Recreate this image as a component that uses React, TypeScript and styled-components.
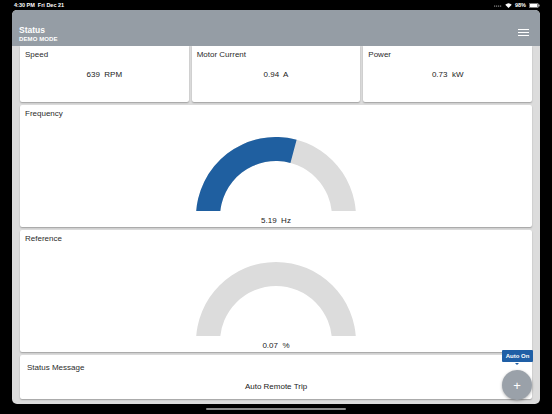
import React from 'react';
import styled, { createGlobalStyle } from 'styled-components';

const Global = createGlobalStyle`
  html, body {
    margin: 0;
    padding: 0;
    background: #000;
  }
  body {
    font-family: "Liberation Sans", Arial, sans-serif;
  }
`;

const Screen = styled.div`
  width: 552px;
  height: 414px;
  background: #000;
  display: flex;
  flex-direction: column;
  overflow: hidden;
  position: relative;
`;

const StatusBar = styled.div`
  height: 10px;
  display: flex;
  align-items: center;
  justify-content: space-between;
  padding: 0 12px 0 14px;
  color: #fff;
  font-size: 5.5px;
  font-weight: 600;
`;

const StatusRight = styled.div`
  display: flex;
  align-items: center;
  gap: 3px;
`;

const Window = styled.div`
  margin: 0 12px;
  height: 394px;
  background: #dcdcdc;
  border-radius: 5px;
  overflow: hidden;
  display: flex;
  flex-direction: column;
`;

const Header = styled.div`
  height: 36px;
  flex-shrink: 0;
  background: #959da5;
  display: flex;
  align-items: flex-end;
  justify-content: space-between;
  padding: 0 11px 3px 7px;
  box-sizing: border-box;
  color: #fff;
`;

const HeaderText = styled.div`
  display: flex;
  flex-direction: column;
`;

const HeaderTitle = styled.div`
  font-size: 8.5px;
  font-weight: 700;
  line-height: 10px;
`;

const HeaderSub = styled.div`
  font-size: 6px;
  font-weight: 700;
  line-height: 8px;
  letter-spacing: 0.1px;
`;

const Burger = styled.div`
  width: 11px;
  display: flex;
  flex-direction: column;
  gap: 1.7px;
  margin-bottom: 7px;
  & span {
    display: block;
    height: 1.3px;
    background: #fff;
  }
`;

const Content = styled.div`
  flex: 1;
  display: flex;
  flex-direction: column;
  gap: 3px;
  padding: 0 8px;
  overflow: hidden;
`;

const TopRow = styled.div`
  display: grid;
  grid-template-columns: repeat(3, 1fr);
  gap: 3px;
  height: 56px;
  flex-shrink: 0;
`;

const Card = styled.div<{ $h: number; $topFlat?: boolean }>`
  background: #fff;
  height: ${p => p.$h}px;
  flex-shrink: 0;
  border-radius: ${p => (p.$topFlat ? '0 0 2px 2px' : '2px')};
  box-shadow: 0 1px 1.5px rgba(0, 0, 0, 0.28);
  display: flex;
  flex-direction: column;
  align-items: center;
  box-sizing: border-box;
  position: relative;
`;

const Title = styled.div<{ $big?: boolean; $top: number }>`
  align-self: stretch;
  padding: ${p => p.$top}px 0 0 ${p => (p.$big ? 7 : 5)}px;
  font-size: 8px;
  line-height: 10px;
  color: #2b2b2b;
`;

const Value = styled.div<{ $mt: number }>`
  margin-top: ${p => p.$mt}px;
  font-size: 8px;
  line-height: 10px;
  color: #222;
  white-space: pre;
`;

const GaugeSvg = styled.svg`
  margin-top: 18px;
  display: block;
`;

const Tip = styled.div`
  position: absolute;
  left: 502px;
  top: 350px;
  width: 31px;
  height: 12px;
  background: #1f5fa6;
  color: #fff;
  font-size: 6px;
  font-weight: 700;
  display: flex;
  align-items: center;
  justify-content: center;
  border-radius: 1px;
  &::after {
    content: '';
    position: absolute;
    left: 13px;
    bottom: -2.5px;
    border-left: 2.5px solid transparent;
    border-right: 2.5px solid transparent;
    border-top: 2.5px solid #1f5fa6;
  }
`;

const Fab = styled.div`
  position: absolute;
  left: 502px;
  top: 370px;
  width: 30px;
  height: 30px;
  border-radius: 50%;
  background: #9aa1a9;
  box-shadow: 0 1px 3px rgba(0, 0, 0, 0.3);
  color: #fff;
  font-size: 13px;
  display: flex;
  align-items: center;
  justify-content: center;
`;

const HomeArea = styled.div`
  flex: 1;
  display: flex;
  align-items: center;
  justify-content: center;
`;

const HomeBar = styled.div`
  width: 140px;
  height: 2.5px;
  border-radius: 2px;
  background: #8c8c8c;
`;

const A = (r: number, a: number) => {
  const rad = (a * Math.PI) / 180;
  return [80 + r * Math.cos(rad), 80 - r * Math.sin(rad)].map(n => n.toFixed(2)).join(' ');
};

function Gauge({ frac }: { frac: number }) {
  const end = 180 - 180 * frac;
  const full = 'M0 80 A80 80 0 0 1 160 80 L136 80 A56 56 0 0 0 24 80 Z';
  const blue = `M0 80 A80 80 0 0 1 ${A(80, end)} L${A(56, end)} A56 56 0 0 0 24 80 Z`;
  return (
    <GaugeSvg width="160" height="74" viewBox="0 0 160 74">
      <path d={full} fill="#dcdcdc" />
      {frac > 0 && <path d={blue} fill="#1f5fa0" />}
    </GaugeSvg>
  );
}

const tops = [
  { t: 'Speed', v: '639  RPM' },
  { t: 'Motor Current', v: '0.94  A' },
  { t: 'Power', v: '0.73  kW' },
];

export default function App() {
  return (
    <Screen>
      <Global />
      <StatusBar>
        <span>4:30 PM&nbsp;&nbsp;Fri Dec 21</span>
        <StatusRight>
          <svg width="8" height="3" viewBox="0 0 8 3">
            {[0, 2, 4, 6].map(x => (
              <rect key={x} x={x} y="1.5" width="1.2" height="1.2" fill="#888" />
            ))}
          </svg>
          <svg width="7" height="5" viewBox="0 0 14 10">
            <path d="M7 10 L0.5 3.5 A9.5 9.5 0 0 1 13.5 3.5 Z" fill="#fff" />
          </svg>
          <span>98%</span>
          <svg width="11" height="5" viewBox="0 0 11 5">
            <rect x="0.3" y="0.3" width="9" height="4.4" rx="1" fill="none" stroke="#fff" strokeWidth="0.6" />
            <rect x="1" y="1" width="7.5" height="3" fill="#fff" />
            <rect x="9.6" y="1.6" width="0.9" height="1.8" fill="#fff" />
          </svg>
        </StatusRight>
      </StatusBar>
      <Window>
        <Header>
          <HeaderText>
            <HeaderTitle>Status</HeaderTitle>
            <HeaderSub>DEMO MODE</HeaderSub>
          </HeaderText>
          <Burger>
            <span />
            <span />
            <span />
          </Burger>
        </Header>
        <Content>
          <TopRow>
            {tops.map(c => (
              <Card key={c.t} $h={56} $topFlat>
                <Title $top={4}>{c.t}</Title>
                <Value $mt={10}>{c.v}</Value>
              </Card>
            ))}
          </TopRow>
          <Card $h={122}>
            <Title $top={4}>Frequency</Title>
            <Gauge frac={0.583} />
            <Value $mt={5}>{'5.19  Hz'}</Value>
          </Card>
          <Card $h={122}>
            <Title $top={4}>Reference</Title>
            <Gauge frac={0} />
            <Value $mt={5}>{'0.07  %'}</Value>
          </Card>
          <Card $h={44}>
            <Title $big $top={8}>Status Message</Title>
            <Value $mt={9}>Auto Remote Trip</Value>
          </Card>
        </Content>
      </Window>
      <HomeArea>
        <HomeBar />
      </HomeArea>
      <Tip>Auto On</Tip>
      <Fab>+</Fab>
    </Screen>
  );
}
